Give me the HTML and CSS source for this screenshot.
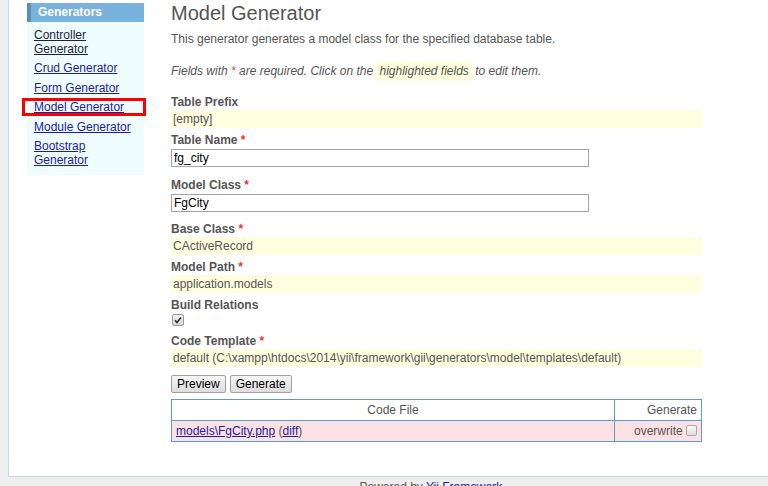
FILE: index.html
```html
<!DOCTYPE html>
<html>
<head>
<meta charset="utf-8">
<title>Model Generator</title>
<link rel="stylesheet" href="styles.css">
</head>
<body>
<div class="page">
  <aside class="sidebar">
    <div class="side-head">Generators</div>
    <ul class="side-list">
      <li><a class="visited" href="#">Controller Generator</a></li>
      <li><a href="#">Crud Generator</a></li>
      <li><a href="#">Form Generator</a></li>
      <li class="current"><a href="#">Model Generator</a><span class="annot"></span></li>
      <li><a href="#">Module Generator</a></li>
      <li><a href="#">Bootstrap Generator</a></li>
    </ul>
  </aside>
  <main class="main">
    <h1 class="title">Model Generator</h1>
    <p class="desc">This generator generates a model class for the specified database table.</p>
    <p class="note">Fields with <span class="req">*</span> are required. Click on the <span class="hl">highlighted fields</span> to edit them.</p>

    <div class="row">
      <div class="label">Table Prefix</div>
      <div class="value">[empty]</div>
    </div>
    <div class="row row-input">
      <div class="label">Table Name <span class="req">*</span></div>
      <input class="text" type="text" value="fg_city">
    </div>
    <div class="row row-input">
      <div class="label">Model Class <span class="req">*</span></div>
      <input class="text" type="text" value="FgCity">
    </div>
    <div class="row">
      <div class="label">Base Class <span class="req">*</span></div>
      <div class="value">CActiveRecord</div>
    </div>
    <div class="row">
      <div class="label">Model Path <span class="req">*</span></div>
      <div class="value">application.models</div>
    </div>
    <div class="row row-check">
      <div class="label">Build Relations</div>
      <span class="check checked"><svg viewBox="0 0 12 12" width="12" height="12"><path d="M3 6.2 L5 8.4 L9 3.4" fill="none" stroke="#333" stroke-width="1.6"/></svg></span>
    </div>
    <div class="row">
      <div class="label">Code Template <span class="req">*</span></div>
      <div class="value">default (C:\xampp\htdocs\2014\yii\framework\gii\generators\model\templates\default)</div>
    </div>

    <div class="buttons">
      <button class="btn" type="button">Preview</button>
      <button class="btn" type="button">Generate</button>
    </div>

    <table class="files">
      <thead>
        <tr><th class="c-file">Code File</th><th class="c-gen">Generate</th></tr>
      </thead>
      <tbody>
        <tr class="overwrite">
          <td class="c-file"><a href="#">models\FgCity.php</a> (<a href="#">diff</a>)</td>
          <td class="c-gen">overwrite <span class="check small"></span></td>
        </tr>
      </tbody>
    </table>
  </main>
</div>
<div class="footer">Powered by <a href="#">Yii Framework</a>.</div>
</body>
</html>
```

FILE: styles.css
```css
html, body {
  margin: 0;
  padding: 0;
}
body {
  background: #efefef;
  font-family: "Liberation Sans", Arial, sans-serif;
  font-size: 12px;
  color: #555;
  overflow: hidden;
}
.page {
  margin-left: 8px;
  height: 477px;
  box-sizing: border-box;
  background: #fff;
  border-left: 1px solid #c8dbe7;
  border-bottom: 1px solid #c8dbe7;
  display: flex;
  align-items: flex-start;
}
.sidebar {
  width: 117px;
  margin-left: 18px;
  margin-top: 3px;
  flex: none;
}
.side-head {
  height: 19px;
  line-height: 18px;
  background: #79b3dd;
  border-left: 4px solid #5a8fb7;
  color: #fff;
  font-weight: bold;
  font-size: 12px;
  padding-left: 7px;
}
.side-list {
  list-style: none;
  margin: 0;
  padding: 5.5px 6px 2px 7px;
  background: #effdff;
}
.side-list li {
  line-height: 14px;
  margin-bottom: 5.5px;
  position: relative;
}
.side-list a {
  color: #1c1ca6;
  text-decoration: underline;
}
.side-list a.visited {
  color: #1e1e44;
}
.annot {
  position: absolute;
  left: -12px;
  top: -2px;
  width: 124px;
  height: 18px;
  box-sizing: border-box;
  border: 3px solid #f00;
}
.main {
  margin-left: 27px;
  padding-top: 1px;
  width: 531px;
  flex: none;
}
.title {
  margin: 0;
  font-size: 20px;
  line-height: 24px;
  font-weight: normal;
  color: #555;
}
.desc {
  margin: 6px 0 0;
  line-height: 16px;
}
.note {
  margin: 16px 0 16px;
  line-height: 16px;
  font-style: italic;
}
.req {
  color: #e33;
  font-style: normal;
  font-weight: bold;
}
.note .req {
  font-style: italic;
  font-weight: normal;
}
.hl {
  background: #ffffe0;
  padding: 3px 3px;
}
.row {
  margin-bottom: 5px;
}
.label {
  font-weight: bold;
  line-height: 14px;
  margin-bottom: 1px;
  color: #555;
}
.value {
  background: #ffffe0;
  height: 18px;
  line-height: 18px;
  padding: 0 2px;
  white-space: nowrap;
}
.row-input {
  margin-bottom: 10.5px;
}
.row-input .label {
  margin-bottom: 2px;
}
.text {
  display: block;
  box-sizing: border-box;
  width: 418px;
  height: 18px;
  margin: 0;
  padding: 0 2px;
  border: 1px solid #a5a5a5;
  font-family: "Liberation Sans", Arial, sans-serif;
  font-size: 12px;
  color: #000;
  background: #fff;
  outline: none;
}
.row-check {
  margin-bottom: 8px;
}
.row-check .label {
  margin-bottom: 2px;
}
.check {
  display: block;
  width: 12px;
  height: 12px;
  margin-left: 1px;
  box-sizing: border-box;
  border: 1px solid #9a9a9a;
  border-radius: 2px;
  background: linear-gradient(#f4f4f4, #d4d4d4);
}
.check svg {
  display: block;
  margin: -1px;
}
.check.small {
  display: inline-block;
  width: 11px;
  height: 11px;
  vertical-align: -1px;
  margin-left: 0;
  border-color: #aaa;
  background: linear-gradient(#f8f8f8, #dedede);
}
.buttons {
  margin-top: 8px;
  display: flex;
  gap: 4px;
  height: 18px;
}
.btn {
  height: 18px;
  margin: 0;
  padding: 0 5px;
  border: 1px solid #a0a0a0;
  border-radius: 2px;
  background: linear-gradient(#f7f7f7, #dcdcdc);
  font-family: "Liberation Sans", Arial, sans-serif;
  font-size: 12px;
  line-height: 15px;
  color: #000;
}
.files {
  margin-top: 6px;
  width: 531px;
  border-collapse: collapse;
  border: 1px solid #5c9dc8;
}
.files th, .files td {
  border: 1px solid #5c9dc8;
  height: 20px;
  padding: 0 4px;
  line-height: 14px;
  font-weight: normal;
  color: #555;
}
.files th.c-file {
  text-align: center;
}
.files .c-gen {
  width: 78px;
  text-align: right;
}
.files tr.overwrite td {
  background: #fde0e1;
}
.files td a {
  color: #1c1ca6;
  text-decoration: underline;
}
.footer {
  text-align: center;
  padding-left: 97px;
  padding-top: 2px;
  line-height: 16px;
  color: #555;
}
.footer a {
  color: #1c1ca6;
  text-decoration: none;
}
```
